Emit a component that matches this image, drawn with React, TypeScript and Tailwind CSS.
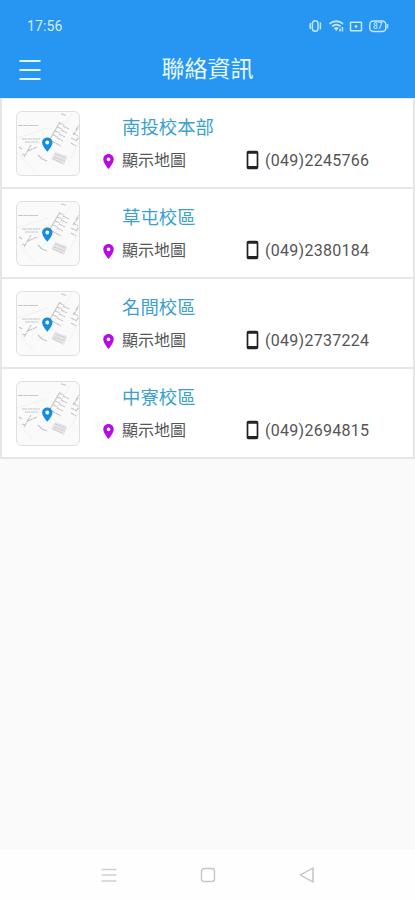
type Campus = { name: string; phone: string };

const campuses: Campus[] = [
  { name: '南投校本部', phone: '(049)2245766' },
  { name: '草屯校區', phone: '(049)2380184' },
  { name: '名間校區', phone: '(049)2737224' },
  { name: '中寮校區', phone: '(049)2694815' },
];

const PIN =
  'M12 2C8.13 2 5 5.13 5 9c0 5.25 7 13 7 13s7-7.75 7-13c0-3.87-3.13-7-7-7zm0 9.500a2.500 2.500 0 1 1 0-5 2.500 2.500 0 0 1 0 5z';

function Pin({ className }: { className: string }) {
  return (
    <svg viewBox="5 2 14 20" className={className} fill="currentColor">
      <path d={PIN} />
    </svg>
  );
}

function StatusIcons() {
  return (
    <svg width="82" height="16" viewBox="0 0 82 16" fill="none" stroke="#bfe8fb" strokeWidth="1.5">
      <rect x="3.400" y="2.800" width="5.600" height="10.400" rx="2.800" />
      <path d="M1.600 5c-.7 2-.7 4 0 6M11.400 4.500v7" />
      <path d="M20.500 5.800c4-3.400 9.500-3.400 13.500 0M23 8.400c2.600-2.200 6-2.200 8.600 0" strokeWidth="1.800" />
      <path d="M24.800 10c1.500-1.200 3.400-1.200 4.900 0l-2.400 3z" fill="#bfe8fb" stroke="none" />
      <path d="M31 10.500v3M33.400 9v4.500" />
      <rect x="41.500" y="4.200" width="11" height="8.600" rx="0.600" />
      <circle cx="47" cy="8.500" r="1.400" fill="#bfe8fb" stroke="none" />
      <rect x="60.800" y="3" width="16" height="10.400" rx="3.500" />
      <path d="M78.500 6v4.400" />
      <text x="68.800" y="11.200" textAnchor="middle" fontSize="8.500" fontFamily="Roboto, sans-serif" fontWeight="500" fill="#bfe8fb" stroke="none">87</text>
    </svg>
  );
}

function MapThumbnail() {
  return (
    <div className="mt-[12px] ml-[14px] grid h-[65px] w-[64px] shrink-0 place-items-center overflow-hidden rounded-[6px] border border-[#dfdfdf] bg-[#fafafa]">
      <svg width="62" height="62" viewBox="0 0 62 62" fill="none">
        <g stroke="#f1f1f1">
          <path d="M34 35L54 1M34 35l18 13M21 48L34 35M0 39l17 19M53 46l9-17M0 25l31-10" />
        </g>
        <g stroke="#c6c6c6" strokeWidth="1.200">
          <path d="M1 12.500H21" strokeDasharray="5 .5" />
          <path d="M5 26h18M8 29h13" strokeDasharray="5 .5" />
          <path d="M33 26L43 9" />
          <path d="M42 10l5 2M46 13l6 3M40 14l5 2M44 17l6 3M38 18l5 2M42 21l6 3M36 22l5 2M40 25l6 3M35 28l9 5" strokeDasharray="4 .6" />
          <path d="M59 17l3-5M56 22l5-7M56 20l5 3M54 25l6 3M54 30l5 3M59 28l3-4" strokeDasharray="4 .6" />
          <path d="M7 44l7-12M11 38l9-4M8 42l-3-1M2 34l3 2" strokeDasharray="5 .5" />
          <path d="M21 42l4 4 5 2" />
          <path d="M44 .7l5 1.500" />
        </g>
        <path d="M38 39l12 4-3 9-13-6z" fill="#e6e6e6" />
        <path d="M38 41l11 4M37 44l11 4M36 46l9 4" stroke="#cbcbcb" strokeDasharray="3 .5" />
        <path fill="#168ce0" fillRule="evenodd" d="M30.300 24.500c-2.900 0-5.200 2.200-5.200 5 0 3.800 5.200 9.200 5.200 9.200s5.200-5.400 5.200-9.200c0-2.800-2.300-5-5.200-5zm0 3a2 2 0 1 1 0 4 2 2 0 0 1 0-4z" />
      </svg>
    </div>
  );
}

function CampusRow({ name, phone }: Campus) {
  return (
    <li className="flex h-[90px] border-b-2 border-[#e6e6e6] bg-white">
      <MapThumbnail />
      <div className="ml-[23px] flex flex-1 flex-col pt-[16px]">
        <h2 className="ml-[19px] h-[26px] text-[18.4px] leading-[26px] text-[#3b9fcf]">{name}</h2>
        <div className="mt-[8px] flex h-[24px] items-center text-[16px] text-[#555]">
          <a className="flex w-[143px] items-center">
            <Pin className="mr-[8px] h-[15px] w-[11px] text-[#b70be0]" />
            <span className="leading-6">顯示地圖</span>
          </a>
          <a className="flex items-center">
            <svg width="13" height="20" viewBox="0 0 13 20" className="mr-[6px] -translate-y-px">
              <rect x="1.500" y="1.500" width="10" height="17" rx="1.200" fill="none" stroke="#222" strokeWidth="1.700" />
              <path d="M1.500 2.500h10M1.500 17.300h10" stroke="#222" strokeWidth="2.600" />
            </svg>
            <span className="leading-6 tracking-[0.280px]">{phone}</span>
          </a>
        </div>
      </div>
    </li>
  );
}

export default function App() {
  return (
    <div className="flex h-[900px] w-full flex-col overflow-hidden bg-[#fafafa] font-[Roboto,'Noto_Sans_CJK_TC',sans-serif]">
      <header className="h-[98px] shrink-0 bg-[#2795f2]">
        <div className="flex h-[42px] items-center justify-between pt-[10px] pr-[24px] pl-[27px]">
          <span className="text-[14px] tracking-[0.1px] text-[#d3eefd]">17:56</span>
          <StatusIcons />
        </div>
        <div className="grid h-[56px] grid-cols-[60px_1fr_60px] items-center">
          <svg width="22" height="22" viewBox="0 0 22 22" className="ml-[19px]" stroke="#dff8ff" strokeWidth="2">
            <path d="M.5 2h21M.5 11h21M.5 20h21" />
          </svg>
          <h1 className="text-center text-[23px] leading-8 text-[#e6f8ff]">聯絡資訊</h1>
        </div>
      </header>
      <main className="flex-1">
        <ul className="border-t border-r-2 border-l-2 border-[#e6e6e6]">
          {campuses.map((c) => (
            <CampusRow key={c.name} {...c} />
          ))}
        </ul>
      </main>
      <nav className="flex h-[50px] shrink-0 items-center justify-center gap-[83px] bg-[#fefefe]">
        <svg width="16" height="16" viewBox="0 0 16 16" stroke="#cfcfcf" strokeWidth="1.500">
          <path d="M.5 2.500h15M.5 8h15M.5 14h15" />
        </svg>
        <svg width="16" height="16" viewBox="0 0 16 16" fill="none" stroke="#c6c6c6" strokeWidth="1.400">
          <rect x="1.500" y="1.500" width="13" height="13" rx="2.500" />
        </svg>
        <svg width="16" height="16" viewBox="0 0 16 16" fill="none" stroke="#c0c0c0" strokeWidth="1.400" strokeLinejoin="round">
          <path d="M1.300 8L14 1v14z" />
        </svg>
      </nav>
    </div>
  );
}
